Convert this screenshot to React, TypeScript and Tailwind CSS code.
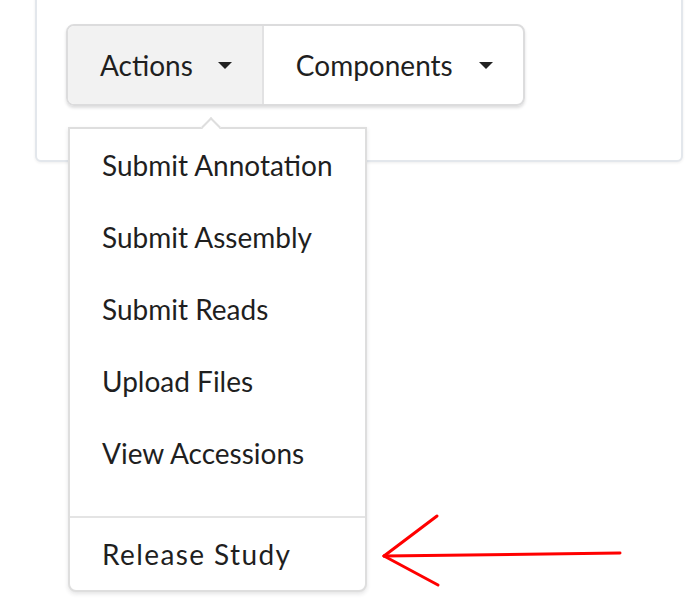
import React from "react";

const Caret = () => (
  <span className="block w-0 h-0 border-l-[7px] border-r-[7px] border-t-[7px] border-l-transparent border-r-transparent border-t-[#222]" />
);

export default function App() {
  const items = ["Submit Annotation", "Submit Assembly", "Submit Reads", "Upload Files", "View Accessions"];
  return (
    <div
      className="relative w-[698px] h-[612px] overflow-hidden bg-white text-[#1f1f1f]"
      style={{ fontFamily: "Lato, 'Open Sans', sans-serif" }}
    >
      <div className="ml-[35px] mt-[-20px] w-[648px] rounded-[6px] border-2 border-[#e3e7ec] bg-white pt-[42px] pb-[54px] pl-[29px] shadow-[0_1px_3px_rgba(34,36,38,0.08)]">
        <div className="relative inline-flex h-[82px] rounded-[8px] border-2 border-[#dcdcdd] shadow-[0_2px_3px_rgba(34,36,38,0.15)]">
          <div className="flex items-center bg-[#f2f2f2] rounded-l-[6px] pl-[32px] pr-[30px] text-[28px] leading-[28px]">
            <span>Actions</span>
            <span className="ml-[25px] flex items-center"><Caret /></span>
          </div>
          <div className="w-[2px] bg-[#e2e2e3]" />
          <div className="flex items-center pl-[32px] pr-[30px] text-[28px] leading-[28px]">
            <span>Components</span>
            <span className="ml-[26px] flex items-center"><Caret /></span>
          </div>

          <div className="absolute left-[0px] top-[101px] z-10 w-[299px] rounded-b-[8px] border-2 border-[#dedede] bg-white shadow-[0_2px_4px_rgba(34,36,38,0.12)]">
            <div className="absolute left-[134px] top-[-9px] w-[14px] h-[14px] rotate-45 bg-white border-l-2 border-t-2 border-[#dedede]" />
            {items.map((t) => (
              <div key={t} className="px-[32px] py-[22px] text-[28px] leading-[28px] whitespace-nowrap">
                {t}
              </div>
            ))}
            <div className="mt-[27px] h-[2px] bg-[#e4e4e4]" />
            <div className="px-[32px] py-[22px] text-[28px] leading-[28px] tracking-[1.4px] whitespace-nowrap">
              Release Study
            </div>
          </div>
        </div>
      </div>

      <svg className="absolute left-0 top-0" width="698" height="612" viewBox="0 0 698 612">
        <g stroke="#ff0000" strokeWidth="3" strokeLinecap="round" fill="none">
          <line x1="620" y1="553" x2="384" y2="556" />
          <line x1="384" y1="556" x2="437" y2="516" />
          <line x1="384" y1="556" x2="438" y2="585" />
        </g>
      </svg>
    </div>
  );
}
